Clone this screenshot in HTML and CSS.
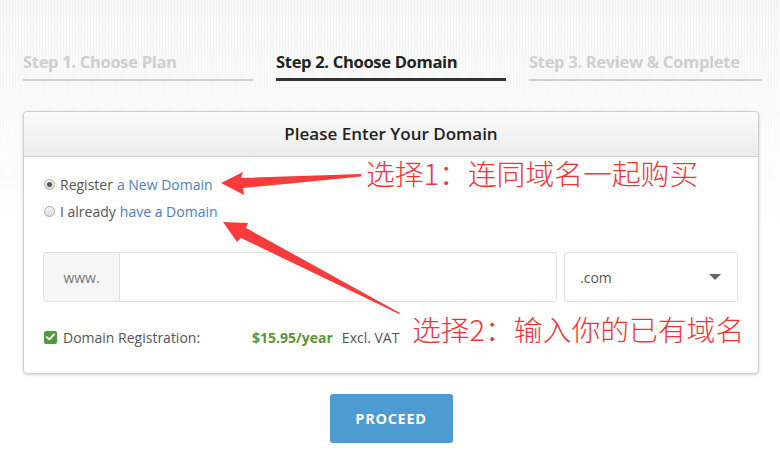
FILE: index.html
```html
<!DOCTYPE html>
<html lang="en">
<head>
<meta charset="utf-8">
<title>Choose Domain</title>
<link rel="stylesheet" href="styles.css">
</head>
<body>
<div class="page">
  <nav class="steps">
    <div class="step">Step 1. Choose Plan</div>
    <div class="step active">Step 2. Choose Domain</div>
    <div class="step">Step 3. Review &amp; Complete</div>
  </nav>

  <section class="card">
    <header class="card-head">Please Enter Your Domain</header>
    <div class="card-body">
      <label class="radio-row"><span class="radio checked"></span>Register <a class="link">a New Domain</a></label>
      <label class="radio-row"><span class="radio"></span>I already <a class="link">have a Domain</a></label>

      <div class="domain-row">
        <div class="input-group">
          <span class="addon">www.</span>
          <span class="field"></span>
        </div>
        <div class="select">
          <span>.com</span>
          <span class="caret"></span>
        </div>
      </div>

      <div class="reg-row">
        <span class="check"><svg width="9" height="8" viewBox="0 0 9 8"><path d="M1 4.2 L3.4 6.4 L8 1.4" fill="none" stroke="#fff" stroke-width="1.9" stroke-linecap="round" stroke-linejoin="round"/></svg></span>
        <span class="reg-label">Domain Registration:</span>
        <span class="price">$15.95/year</span>
        <span class="vat">Excl. VAT</span>
      </div>
    </div>
  </section>

  <div class="actions">
    <button class="proceed">PROCEED</button>
  </div>

  <svg class="arrows" width="780" height="462" viewBox="0 0 780 462">
    <polygon fill="#f93b3b" points="221,183 243,172 241,178 361,174 361,176.5 243,188 244,195"/>
    <polygon fill="#f93b3b" points="223,222 248,223 246,228 400,313 399,314 241,238 237,242"/>
  </svg>
  <div class="note note1">选择1：连同域名一起购买</div>
  <div class="note note2">选择2：输入你的已有域名</div>
</div>
</body>
</html>
```

FILE: styles.css
```css
html, body {
  margin: 0;
  padding: 0;
}
body {
  width: 780px;
  height: 462px;
  overflow: hidden;
  font-family: "Open Sans", "Liberation Sans", sans-serif;
  color: #555;
  background:
    linear-gradient(to bottom, rgba(255,255,255,0) 0px, rgba(255,255,255,0.4) 90px, #fff 230px),
    repeating-linear-gradient(to right, #f1f1f1 0px, #f1f1f1 1px, #f8f8f8 1px, #f8f8f8 3px);
}
.page {
  position: relative;
  width: 780px;
  height: 462px;
  padding: 50px 21px 0 23px;
  box-sizing: border-box;
}
.steps {
  display: grid;
  grid-template-columns: 230px 230px 233px;
  column-gap: 23px;
}
.step {
  font-size: 16.6px;
  font-weight: 700;
  color: #cfcfcf;
  letter-spacing: -0.35px;
  padding-bottom: 6px;
  border-bottom: 2px solid #cfcfcf;
  line-height: 23px;
}
.step.active {
  color: #222;
  border-bottom: 3px solid #333;
  padding-bottom: 5px;
}
.card {
  margin-top: 30px;
  width: 736px;
  border: 1px solid #cfcfcf;
  border-radius: 4px;
  background: #fff;
  box-shadow: 0 1px 3px rgba(0,0,0,0.18);
  box-sizing: border-box;
}
.card-head {
  height: 44px;
  line-height: 44px;
  text-align: center;
  font-size: 17px;
  font-weight: 600;
  color: #222;
  background: linear-gradient(to bottom, #fbfbfb, #ececec);
  border-bottom: 1px solid #cfcfcf;
  border-radius: 4px 4px 0 0;
}
.card-body {
  padding: 14px 20px 27px 19px;
}
.radio-row {
  display: flex;
  align-items: center;
  font-size: 14px;
  color: #555;
  height: 27px;
}
.radio {
  width: 11px;
  height: 11px;
  border-radius: 50%;
  border: 1px solid #aaa;
  background: linear-gradient(#f4f4f4, #dcdcdc);
  margin-right: 5px;
  box-sizing: border-box;
  position: relative;
  margin-left: 1px;
}
.radio.checked::after {
  content: "";
  position: absolute;
  left: 2px;
  top: 2px;
  width: 5px;
  height: 5px;
  border-radius: 50%;
  background: #555;
}
.link {
  color: #4a80c4;
  margin-left: 4px;
}
.domain-row {
  display: flex;
  gap: 7px;
  margin-top: 27px;
  height: 50px;
}
.input-group {
  width: 514px;
  display: flex;
  border: 1px solid #e2e2e2;
  border-radius: 3px;
  box-sizing: border-box;
}
.addon {
  width: 75px;
  background: #f6f6f6;
  border-right: 1px solid #e2e2e2;
  display: flex;
  align-items: center;
  justify-content: center;
  font-size: 14px;
  color: #777;
  border-radius: 3px 0 0 3px;
}
.field {
  flex: 1;
}
.select {
  width: 174px;
  border: 1px solid #e2e2e2;
  border-radius: 3px;
  box-sizing: border-box;
  display: flex;
  align-items: center;
  justify-content: space-between;
  padding: 0 16px 0 15px;
  font-size: 14px;
  color: #555;
}
.caret {
  width: 0;
  height: 0;
  border-left: 6px solid transparent;
  border-right: 6px solid transparent;
  border-top: 6px solid #666;
}
.reg-row {
  display: flex;
  align-items: center;
  margin-top: 26px;
  font-size: 14px;
  color: #555;
  height: 18px;
}
.check {
  width: 13px;
  height: 13px;
  background: #4e9a3c;
  border-radius: 2px;
  display: flex;
  align-items: center;
  justify-content: center;
  margin-left: 1px;
  margin-right: 6px;
}
.reg-label {
  width: 189px;
}
.price {
  color: #5a9434;
  font-weight: 700;
  font-size: 14px;
  margin-right: 9px;
}
.actions {
  display: flex;
  justify-content: center;
  margin-top: 20px;
  width: 736px;
}
.proceed {
  width: 123px;
  height: 49px;
  border: none;
  border-radius: 3px;
  background: #4e9ad3;
  color: #fff;
  font-family: "Open Sans", "Liberation Sans", sans-serif;
  font-weight: 700;
  font-size: 14.5px;
  letter-spacing: 0.7px;
}
.arrows {
  position: absolute;
  left: 0;
  top: 0;
  pointer-events: none;
}
.note {
  position: absolute;
  font-family: "Noto Sans CJK SC", sans-serif;
  font-weight: 300;
  font-size: 28.8px;
  line-height: 30px;
  color: #f0343a;
  white-space: nowrap;
}
.note1 {
  left: 366px;
  top: 158px;
}
.note2 {
  left: 412px;
  top: 314px;
}
```
